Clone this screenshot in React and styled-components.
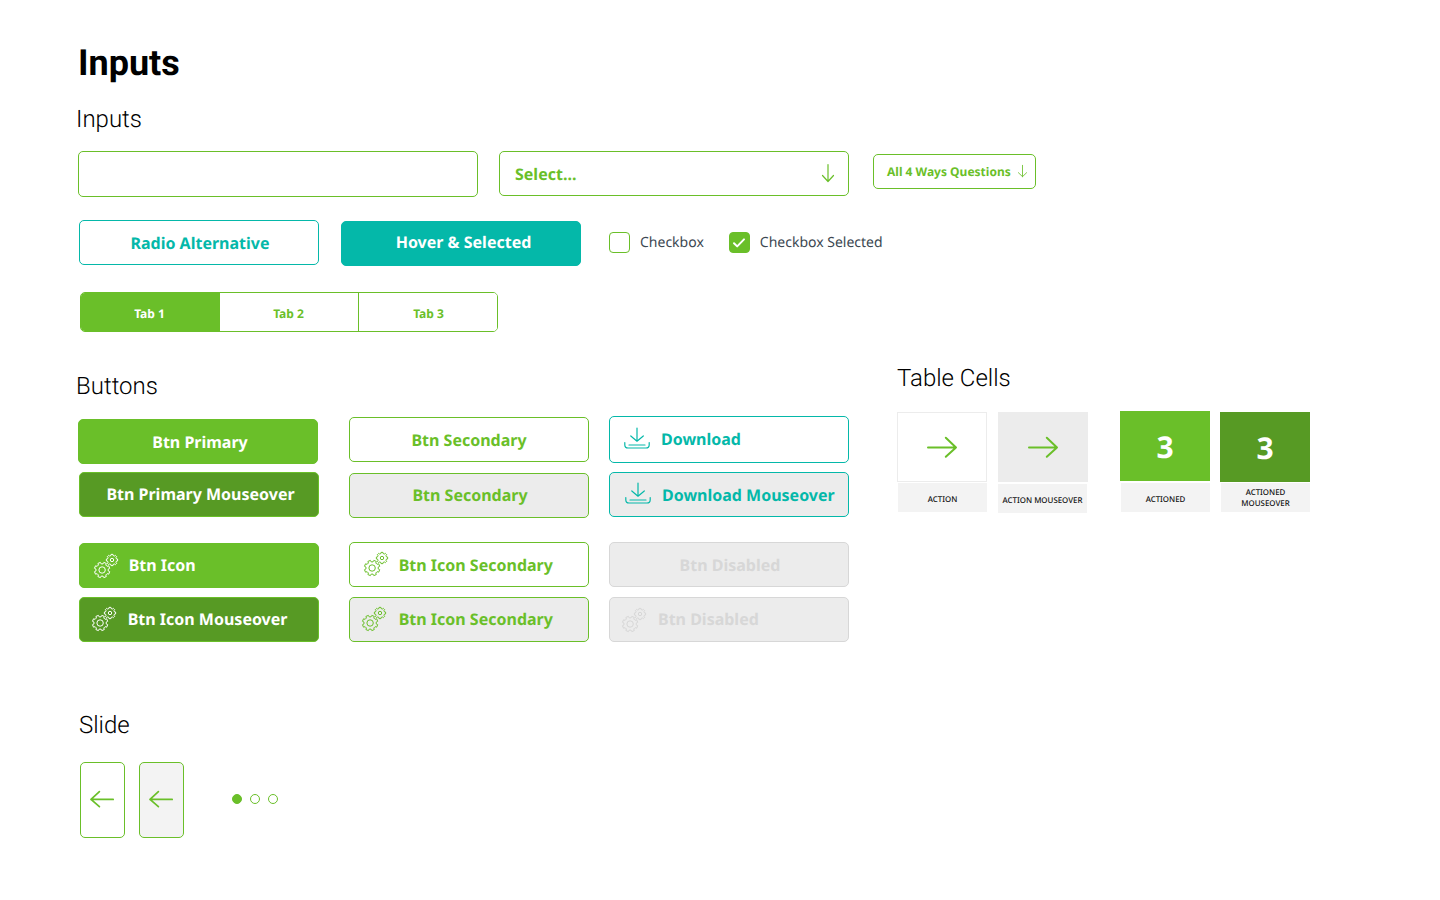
import React from "react";
import styled, { createGlobalStyle, css } from "styled-components";

const c = {
  green: "#6abf29",
  dark: "#579a24",
  teal: "#04b8a9",
  grey: "#ececec",
  light: "#f3f3f3",
  off: "#d7d7d7",
  slate: "#3d4852",
};

const GlobalStyle = createGlobalStyle`
  * { box-sizing: border-box; }
  body { margin: 0; background: #fff; text-rendering: geometricPrecision; }
  h1, h2, p { margin: 0; }
  button { font: inherit; margin: 0; padding: 0; text-rendering: inherit; }
  svg { display: block; flex: none; overflow: visible; }
`;

const Page = styled.main`
  width: 1440px;
  height: 900px;
  padding: 42px 0 0 78px;
  overflow: hidden;
  background: #fff;
  color: #000;
  font-family: "Noto Sans", sans-serif;
`;

const Title = styled.h1`
  font: 700 36px/42px Roboto, sans-serif;
`;

const Heading = styled.h2`
  font: 300 24px/28px Roboto, sans-serif;
  margin-left: ${(p) => p.$indent || 0}px;
`;

const Row = styled.div`
  display: flex;
  align-items: flex-start;
  gap: ${(p) => p.$gap || 0}px;
  margin-top: ${(p) => p.$top || 0}px;
  margin-left: ${(p) => p.$left || 0}px;
`;

const Column = styled.div`
  display: flex;
  flex-direction: column;
  margin-top: ${(p) => p.$top || 0}px;
  margin-left: ${(p) => p.$left || 0}px;
`;

const outlined = css`
  border: 1px solid ${c.green};
  border-radius: 5px;
`;

const TextInput = styled.input`
  ${outlined}
  width: 400px;
  height: 46px;
  padding: 0 15px;
  outline: none;
  background: #fff;
`;

const Select = styled.button`
  ${outlined}
  display: flex;
  justify-content: space-between;
  align-items: flex-start;
  width: 350px;
  height: 45px;
  margin-left: 21px;
  padding: 11px 14px 0 15px;
  background: #fff;
  color: ${c.green};
  font: 700 16px/22px "Noto Sans", sans-serif;

  svg { margin-top: 1px; }
`;

const SmallSelect = styled(Select)`
  width: 163px;
  height: 35px;
  margin: 3px 0 0 24px;
  padding: 9px 8px 0 13px;
  font-size: 12px;
  line-height: 16px;
`;

const variants = {
  primary: [c.green, c.green, "#fff"],
  primaryHover: [c.dark, c.green, "#fff"],
  secondary: ["#fff", c.green, c.green],
  secondaryHover: [c.grey, c.green, c.green],
  teal: ["#fff", c.teal, c.teal],
  tealHover: [c.grey, c.teal, c.teal],
  tealSolid: [c.teal, c.teal, "#fff"],
  disabled: [c.grey, c.off, c.off],
};

const ButtonBox = styled.button`
  display: flex;
  align-items: flex-start;
  justify-content: ${(p) => (p.$start ? "flex-start" : "center")};
  width: 240px;
  height: ${(p) => p.$height || 45}px;
  margin-top: ${(p) => p.$top || 0}px;
  margin-left: ${(p) => p.$left || 0}px;
  padding-top: ${(p) => (p.$textTop || 11) - 1}px;
  padding-left: ${(p) => p.$pad || 0}px;
  border: 1px solid ${(p) => variants[p.$variant][1]};
  border-radius: 5px;
  background: ${(p) => variants[p.$variant][0]};
  color: ${(p) => variants[p.$variant][2]};
  font: 700 16px/22px "Noto Sans", sans-serif;
  white-space: nowrap;
`;

const IconSlot = styled.span`
  display: block;
  width: ${(p) => p.$width}px;
  height: 22px;
  padding-top: ${(p) => Math.max(p.$drop || 0, 0)}px;
  margin-top: ${(p) => Math.min(p.$drop || 0, 0)}px;
`;

const CheckLabel = styled.label`
  display: flex;
  align-items: flex-start;
  gap: 10px;
  margin-top: 12px;
  margin-left: ${(p) => p.$left}px;
  color: ${c.slate};
  font-size: 14px;
  line-height: 21px;
`;

const CheckBox = styled.span`
  display: flex;
  align-items: center;
  justify-content: center;
  width: 21px;
  height: 21px;
  border: 1px solid ${c.green};
  border-radius: 4px;
  background: ${(p) => (p.$checked ? c.green : "#fff")};
`;

const Tabs = styled.div`
  ${outlined}
  display: flex;
  width: 418px;
  height: 40px;
  margin: 26px 0 0 2px;
  overflow: hidden;
`;

const Tab = styled.button`
  flex: none;
  width: 139px;
  padding: 4px ${(p) => (p.$last ? 0 : 1)}px 0 0;
  border: 0;
  border-right: ${(p) => (p.$last ? 0 : 1)}px solid ${c.green};
  background: ${(p) => (p.$active ? c.green : "#fff")};
  color: ${(p) => (p.$active ? "#fff" : c.green)};
  font: 700 12px/16px "Noto Sans", sans-serif;
`;

const Cell = styled.div`
  width: 90px;
  margin-top: ${(p) => p.$top || 0}px;
  margin-left: ${(p) => p.$left || 0}px;
`;

const CellFace = styled.div`
  display: flex;
  align-items: center;
  justify-content: center;
  height: 70px;
  padding-top: ${(p) => p.$drop || 0}px;
  border: 1px solid ${(p) => p.$border || p.$bg};
  background: ${(p) => p.$bg};
  color: #fff;
  font-size: 30px;
  font-weight: 700;
  line-height: 40px;
`;

const Caption = styled.p`
  display: flex;
  align-items: center;
  justify-content: center;
  width: 89px;
  height: 29px;
  margin-top: ${(p) => p.$top || 1}px;
  margin-left: ${(p) => p.$left || 0}px;
  padding-top: ${(p) => (p.$double ? 3 : 5)}px;
  background: ${c.light};
  color: #111;
  font-size: 7.9px;
  font-weight: 500;
  line-height: 11px;
  text-align: center;
`;

const SlideButton = styled.button`
  ${outlined}
  display: flex;
  align-items: center;
  justify-content: center;
  width: 45px;
  height: 76px;
  padding: 0 1px 2px 0;
  background: ${(p) => (p.$hover ? c.light : "#fff")};
`;

const Dot = styled.span`
  width: 10px;
  height: 10px;
  border: 1px solid ${c.green};
  border-radius: 50%;
  background: ${(p) => (p.$active ? c.green : "#fff")};
`;

function gearPath(cx, cy, outer, inner, teeth, turn) {
  const step = (Math.PI * 2) / teeth;
  const pts = [];
  for (let i = 0; i < teeth; i++) {
    const a = i * step + turn;
    [[-0.31, inner], [-0.22, outer], [0.22, outer], [0.31, inner]].forEach(([f, r]) => {
      const t = a + f * step;
      pts.push(`${(cx + r * Math.cos(t)).toFixed(2)} ${(cy + r * Math.sin(t)).toFixed(2)}`);
    });
  }
  return `M${pts.join("L")}Z`;
}

const bigGear = gearPath(8.1, 16, 7.8, 6.2, 8, Math.PI / 8);
const smallGear = gearPath(18, 6, 5.7, 4.6, 8, 0);

const Gears = () => (
  <svg width="24" height="24" viewBox="0 0 24 24" fill="none" stroke="currentColor" strokeWidth="1" strokeLinejoin="round">
    <path d={bigGear} />
    <circle cx="8.1" cy="16" r="3.2" />
    <path d={smallGear} />
    <circle cx="18" cy="6" r="1.7" />
  </svg>
);

const DownloadIcon = () => (
  <svg width="26" height="22" viewBox="0 0 26 22" fill="none" stroke="currentColor" strokeWidth="1.2" strokeLinecap="round" strokeLinejoin="round">
    <path d="M13 1v13M6.8 9 13 14.2 19.3 9M5 18h16" />
    <path d="M.8 15.5v2.2q0 3.3 3.3 3.3h17.8q3.3 0 3.3-3.3v-2.2" />
  </svg>
);

const DownArrow = ({ width, height, weight }) => (
  <svg width={width} height={height} viewBox="0 0 12 18" preserveAspectRatio="none" fill="none" stroke="currentColor" strokeWidth={weight} strokeLinecap="round" strokeLinejoin="round">
    <path d="M6 .5v17M.5 11.5l5.5 6 5.5-6" />
  </svg>
);

const RightArrow = () => (
  <svg width="30" height="22" viewBox="0 0 30 22" fill="none" stroke={c.green} strokeWidth="2" strokeLinecap="round" strokeLinejoin="round">
    <path d="M1 11.5h28M18.8 1.8 29 11.5 18.8 20.8" />
  </svg>
);

const LeftArrow = () => (
  <svg width="24" height="18" viewBox="0 0 24 18" fill="none" stroke={c.green} strokeWidth="1.7" strokeLinecap="round" strokeLinejoin="round">
    <path d="M23.2 9.4H1M9.4 1.6 1 9.4l8.4 7.3" />
  </svg>
);

const Check = () => (
  <svg width="12" height="10" viewBox="0 0 12 10" fill="none" stroke="#fff" strokeWidth="2" strokeLinecap="round" strokeLinejoin="round">
    <path d="M1 5.2 4.2 8.4 11 1.4" />
  </svg>
);

const IconButton = ({ icon, iconWidth, drop, children, ...rest }) => (
  <ButtonBox $start {...rest}>
    <IconSlot $width={iconWidth} $drop={drop}>{icon}</IconSlot>
    {children}
  </ButtonBox>
);

export default function App() {
  return (
    <>
      <GlobalStyle />
      <Page>
        <Title>Inputs</Title>

        <Row $top={21}><Heading $indent={-2}>Inputs</Heading></Row>
        <Row $top={18}>
          <TextInput aria-label="Text" />
          <Select>Select...<DownArrow width={12} height={18} weight={1.2} /></Select>
          <SmallSelect>All 4 Ways Questions<DownArrow width={9} height={12} weight={1.2} /></SmallSelect>
        </Row>
        <Row $top={23} $left={1}>
          <ButtonBox $variant="teal" $textTop={12} $pad={2}>Radio Alternative</ButtonBox>
          <ButtonBox $variant="tealSolid" $top={1} $left={22} $textTop={10} $pad={5}>Hover &amp; Selected</ButtonBox>
          <CheckLabel $left={28}><CheckBox />Checkbox</CheckLabel>
          <CheckLabel $left={25}><CheckBox $checked><Check /></CheckBox>Checkbox Selected</CheckLabel>
        </Row>
        <Tabs>
          <Tab $active>Tab 1</Tab>
          <Tab>Tab 2</Tab>
          <Tab $last>Tab 3</Tab>
        </Tabs>

        <Row $top={32}>
          <Column $top={8}>
            <Heading $indent={-2}>Buttons</Heading>
            <Row>
              <Column $top={19}>
                <ButtonBox $variant="primary" $textTop={12} $pad={4}>Btn Primary</ButtonBox>
                <ButtonBox $variant="primaryHover" $top={8} $left={1} $pad={3}>Btn Primary Mouseover</ButtonBox>
                <IconButton $variant="primary" $top={26} $left={1} $pad={14} icon={<Gears />} iconWidth={34.7}>Btn Icon</IconButton>
                <IconButton $variant="primaryHover" $top={9} $left={1} $pad={12} icon={<Gears />} iconWidth={35.7} drop={-1}>Btn Icon Mouseover</IconButton>
              </Column>
              <Column $top={17} $left={30}>
                <ButtonBox $variant="secondary" $textTop={12}>Btn Secondary</ButtonBox>
                <ButtonBox $variant="secondaryHover" $top={11} $pad={2}>Btn Secondary</ButtonBox>
                <IconButton $variant="secondary" $top={24} $textTop={12} $pad={14} icon={<Gears />} iconWidth={34.7} drop={-2}>Btn Icon Secondary</IconButton>
                <IconButton $variant="secondaryHover" $top={10} $pad={12} icon={<Gears />} iconWidth={36.7} drop={-1}>Btn Icon Secondary</IconButton>
              </Column>
              <Column $top={16} $left={20}>
                <IconButton $variant="teal" $height={47} $textTop={12} $pad={14} icon={<DownloadIcon />} iconWidth={37} drop={-1}>Download</IconButton>
                <IconButton $variant="tealHover" $top={9} $textTop={12} $pad={14.6} icon={<DownloadIcon />} iconWidth={37.4} drop={-2}>Download Mouseover</IconButton>
                <ButtonBox $variant="disabled" $top={25} $textTop={12} $pad={2}>Btn Disabled</ButtonBox>
                <IconButton $variant="disabled" $top={10} $pad={12} icon={<Gears />} iconWidth={36}>Btn Disabled</IconButton>
              </Column>
            </Row>
          </Column>

          <Column $left={48}>
            <Heading>Table Cells</Heading>
            <Row $top={19}>
              <Cell $top={1}>
                <CellFace $bg="#fff" $border={c.grey}><RightArrow /></CellFace>
                <Caption $left={1}>ACTION</Caption>
              </Cell>
              <Cell $top={1} $left={11}>
                <CellFace $bg={c.grey}><RightArrow /></CellFace>
                <Caption $top={2}>ACTION MOUSEOVER</Caption>
              </Cell>
              <Cell $left={32}>
                <CellFace $bg={c.green} $drop={2}>3</CellFace>
                <Caption $top={2} $left={1}>ACTIONED</Caption>
              </Cell>
              <Cell $top={1} $left={10}>
                <CellFace $bg={c.dark} $drop={2}>3</CellFace>
                <Caption $left={1} $double>ACTIONED<br />MOUSEOVER</Caption>
              </Cell>
            </Row>
          </Column>
        </Row>

        <Row $top={69}><Heading $indent={1}>Slide</Heading></Row>
        <Row $top={23} $left={2} $gap={14}>
          <SlideButton aria-label="Previous"><LeftArrow /></SlideButton>
          <SlideButton aria-label="Previous" $hover><LeftArrow /></SlideButton>
          <Row $top={32} $left={34} $gap={8}>
            <Dot $active /><Dot /><Dot />
          </Row>
        </Row>
      </Page>
    </>
  );
}
